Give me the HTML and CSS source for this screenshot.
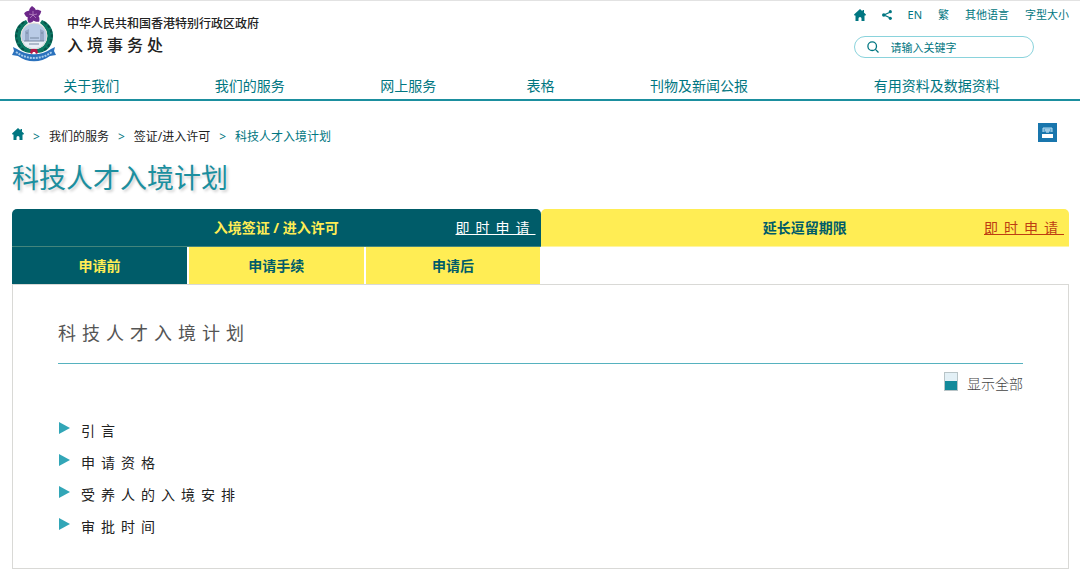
FILE: index.html
```html
<!DOCTYPE html>
<html lang="zh-CN">
<head>
    <meta charset="UTF-8">
    <meta name="viewport" content="width=device-width, initial-scale=1.0">
    <title>科技人才入境计划</title>
    <link rel="stylesheet" href="styles.css">
</head>
<body>
    <header class="site-header">
        <div class="header-top">
            <a class="brand" href="#">
                <svg class="brand-logo" viewBox="0 0 44 56" aria-hidden="true">
                    <path d="M14 13C4 17 1 27 4 35c2 7 8 11 15 11l1-4c-7-1-10-5-11-11-1-7 2-11 7-15z" fill="#0b7763"/>
                    <path d="M30 13c10 4 13 14 10 22-2 7-8 11-15 11l-1-4c7-1 10-5 11-11 1-7-2-11-7-15z" fill="#0b7763"/>
                    <path d="M12 15C5 20 3 27 5 34c2 5 5 8 9 10M32 15c7 5 9 12 7 19-2 5-5 8-9 10" fill="none" stroke="#075148" stroke-width="2" stroke-dasharray="3 2"/>
                    <circle cx="22" cy="29" r="13" fill="#b9cbe6" stroke="#e3ded6" stroke-width="1"/>
                    <path d="M13 24l4-2v13h-4zM28 22l4 2v11h-4z" fill="#97a9c8"/>
                    <path d="M11 34h22c-2 5-5 7-11 7s-9-2-11-7z" fill="#e8eff6"/>
                    <path d="M12 34h20M18 31h9M17 37h10M14 26h2M29 26h2" stroke="#74869f" stroke-width="1"/>
                    <path d="M1 40l4 2c10 7 24 7 34 0l4-2-1 4 2 4-6 1c-9 7-23 7-32 0l-6-1 2-4z" fill="#2b72bd"/>
                    <path d="M4 45c11 8 25 8 36 0" fill="none" stroke="#a9cdec" stroke-width="2" stroke-dasharray="2 1"/>
                    <path d="M18 46l1-4h6l1 4-2 1-1-2h-2l-1 2z" fill="#b41848"/>
                    <g fill="#6c2789">
                        <path id="petal" d="M21 8c-5-2-5-6-1-9 5 3 5 6 1 9z"/>
                        <use href="#petal" transform="rotate(72 21 8)"/>
                        <use href="#petal" transform="rotate(144 21 8)"/>
                        <use href="#petal" transform="rotate(216 21 8)"/>
                        <use href="#petal" transform="rotate(288 21 8)"/>
                    </g>
                    <path d="M21 8V4M21 8l4-1M21 8l3 3M21 8l-3 3M21 8l-4-1" stroke="#c193cb" stroke-width=".7"/>
                </svg>
                <span class="brand-text">
                    <span class="brand-gov">中华人民共和国香港特别行政区政府</span>
                    <span class="brand-dept">入境事务处</span>
                </span>
            </a>
            <div class="header-tools">
                <nav class="tool-links" aria-label="工具">
                    <a href="#" aria-label="主页">
                        <svg class="icon-home" viewBox="0 0 12 12" aria-hidden="true"><path d="M6 0l6 5.500-.8 1.200-.7-.2V12H7.500V9.500a1.500 1.500 0 0 0-3 0V12h-3V6.500l-.7.2L0 5.500zM8.500 1H10v2.500l-1.500-1z"/></svg>
                    </a>
                    <a href="#" aria-label="分享">
                        <svg class="icon-share" viewBox="0 0 10 10" aria-hidden="true"><path d="M8.500 2L2 5l6.500 3" fill="none" stroke="#007681" stroke-width="1.300"/><circle cx="8.300" cy="1.700" r="1.600"/><circle cx="1.800" cy="5" r="1.800"/><circle cx="8.300" cy="8.300" r="1.600"/></svg>
                    </a>
                    <a href="#">EN</a>
                    <a href="#">繁</a>
                    <a href="#">其他语言</a>
                    <a href="#">字型大小</a>
                </nav>
                <form class="search">
                    <button class="search-button" type="submit" aria-label="搜寻">
                        <svg viewBox="0 0 12 12" aria-hidden="true"><circle cx="5.200" cy="5.200" r="4.300"/><path d="M8.400 8.400L11.500 11.500"/></svg>
                    </button>
                    <input class="search-input" type="text" placeholder="请输入关键字" aria-label="请输入关键字">
                </form>
            </div>
        </div>
        <nav class="main-nav" aria-label="主目录">
            <a href="#">关于我们</a>
            <a href="#">我们的服务</a>
            <a href="#">网上服务</a>
            <a href="#">表格</a>
            <a href="#">刊物及新闻公报</a>
            <a href="#">有用资料及数据资料</a>
        </nav>
    </header>

    <main class="page">
        <div class="page-bar">
            <nav class="breadcrumb" aria-label="路径">
                <a class="breadcrumb-home" href="#" aria-label="主页">
                    <svg class="icon-home" viewBox="0 0 12 12" aria-hidden="true"><path d="M6 0l6 5.500-.8 1.200-.7-.2V12H7.500V9.500a1.500 1.500 0 0 0-3 0V12h-3V6.500l-.7.2L0 5.500zM8.500 1H10v2.500l-1.500-1z"/></svg>
                </a>
                <span class="separator">&gt;</span>
                <a href="#">我们的服务</a>
                <span class="separator">&gt;</span>
                <a href="#">签证/进入许可</a>
                <span class="separator">&gt;</span>
                <span class="current">科技人才入境计划</span>
            </nav>
            <button class="print-button" type="button" aria-label="列印">
                <svg viewBox="0 0 19 19" aria-hidden="true">
                    <path d="M5 9V5h9v4" fill="#5ca5d1" stroke="#b5dcf0"/>
                    <path d="M7 7h5M8 9h3" stroke="#d8edf8"/>
                    <path d="M4 11h11v4H4z" fill="#fff"/>
                </svg>
            </button>
        </div>

        <h1 class="page-title">科技人才入境计划</h1>

        <div class="tabs">
            <div class="tab tab-active">
                <a class="tab-name" href="#">入境签证 / 进入许可</a>
                <a class="apply-link" href="#">即时申请</a>
            </div>
            <div class="tab">
                <a class="tab-name" href="#">延长逗留期限</a>
                <a class="apply-link" href="#">即时申请</a>
            </div>
        </div>
        <div class="subtabs">
            <button class="subtab subtab-active" type="button">申请前</button>
            <button class="subtab" type="button">申请手续</button>
            <button class="subtab" type="button">申请后</button>
        </div>

        <section class="panel">
            <h2 class="panel-title">科技人才入境计划</h2>
            <div class="panel-actions">
                <button class="show-all" type="button"><span class="show-all-icon"></span>显示全部</button>
            </div>
            <ul class="topics">
                <li><button class="topic" type="button">引言</button></li>
                <li><button class="topic" type="button">申请资格</button></li>
                <li><button class="topic" type="button">受养人的入境安排</button></li>
                <li><button class="topic" type="button">审批时间</button></li>
            </ul>
        </section>
    </main>
</body>
</html>
```
FILE: styles.css
```css
:root {
    --teal: #007681;
    --teal-dark: #005c69;
    --teal-light: #1b8f9f;
    --yellow: #ffed54;
    --border: #d9d9d6;
}

* {
    box-sizing: border-box;
}

body {
    margin: 0;
    font-family: "Noto Sans", "Noto Sans CJK SC", sans-serif;
    font-size: 14px;
    line-height: 20px;
    color: #222222;
    background-color: #ffffff;
}

a {
    color: inherit;
    text-decoration: none;
}

button {
    padding: 0;
    border: none;
    background: none;
    color: inherit;
    font: inherit;
    cursor: pointer;
}

svg {
    display: block;
}

/* Header */
.site-header {
    border-top: 1px solid #e2e2e2;
    border-bottom: 2px solid var(--teal-light);
    color: var(--teal);
}

.header-top {
    display: flex;
    justify-content: space-between;
    padding: 6px 11px 0 12px;
}

.brand {
    display: flex;
    gap: 11px;
    color: #222222;
}

.brand-logo {
    width: 44px;
    height: 56px;
    overflow: visible;
}

.brand-text {
    display: flex;
    flex-direction: column;
    padding-top: 7px;
    font-weight: 500;
}

.brand-gov {
    font-size: 12px;
}

.brand-dept {
    font-size: 16px;
    line-height: 22px;
    letter-spacing: 4px;
}

.header-tools {
    display: flex;
    flex-direction: column;
    gap: 13px;
}

.tool-links {
    display: flex;
    align-items: center;
    gap: 16px;
    height: 16px;
    font-size: 11px;
}

.icon-home {
    width: 12px;
    height: 12px;
    fill: var(--teal);
}

.icon-share {
    width: 10px;
    height: 10px;
    fill: var(--teal);
}

.search {
    display: flex;
    align-items: center;
    gap: 12px;
    width: 180px;
    height: 22px;
    padding: 0 12px;
    border: 1px solid #8ad3dc;
    border-radius: 11px;
}

.search-button svg {
    width: 12px;
    height: 12px;
    fill: none;
    stroke: var(--teal);
    stroke-width: 1.3;
}

.search-input {
    flex: 1;
    min-width: 0;
    padding: 0;
    border: none;
    outline: none;
    background: none;
    color: var(--teal);
    font-family: inherit;
    font-size: 11px;
}

.search-input::placeholder {
    color: var(--teal);
    opacity: 1;
}

.main-nav {
    display: grid;
    grid-template-columns: 3fr 3fr 3fr 2fr 4fr 5fr;
    padding: 13px 11px 3px 12px;
    text-align: center;
}

/* Page */
.page {
    padding: 22px 11px 8px 12px;
}

.page-bar {
    display: flex;
    justify-content: space-between;
    padding-right: 12px;
}

.breadcrumb {
    display: flex;
    align-items: center;
    gap: 9px;
    padding-top: 4px;
    font-size: 12px;
}

.breadcrumb-home {
    padding-bottom: 6px;
}

.separator,
.current {
    color: var(--teal);
}

.print-button {
    width: 19px;
    height: 19px;
    background-color: #1976ad;
}

.page-title {
    margin: 12px 0;
    font-size: 27px;
    font-weight: 400;
    line-height: 38px;
    color: var(--teal-light);
    text-shadow: 2px 2px 3px rgba(0, 0, 0, 0.2);
}

/* Tabs */
.tabs {
    display: grid;
    grid-template-columns: 1fr 1fr;
}

.tab {
    display: grid;
    grid-template-columns: 1fr auto 1fr;
    align-items: center;
    height: 38px;
    padding: 0 5px;
    border-bottom: 1px solid #fff5a0;
    border-radius: 5px 5px 0 0;
    background-color: var(--yellow);
    color: var(--teal-dark);
}

.tab-active {
    border-bottom-color: #44857c;
    background-color: var(--teal-dark);
    color: var(--yellow);
}

.tab-name {
    grid-column: 2;
    font-weight: 700;
}

.apply-link {
    justify-self: end;
    color: #bd3d12;
    letter-spacing: 6px;
    text-decoration: underline;
}

.tab-active .apply-link {
    color: #ffffff;
}

.subtabs {
    display: grid;
    grid-template-columns: repeat(3, 1fr);
    gap: 2px;
    width: 50%;
}

.subtab {
    height: 37px;
    background-color: var(--yellow);
    color: var(--teal-dark);
    font-weight: 700;
}

.subtab-active {
    background-color: var(--teal-dark);
    color: var(--yellow);
}

/* Content panel */
.panel {
    padding: 33px 45px 25px;
    border: 1px solid var(--border);
}

.panel-title {
    margin: 0;
    padding-bottom: 15px;
    border-bottom: 1px solid #56b2bf;
    font-size: 18px;
    font-weight: 400;
    line-height: 30px;
    letter-spacing: 6px;
    color: #555555;
}

.panel-actions {
    display: flex;
    justify-content: flex-end;
    padding: 8px 0 19px;
}

.show-all {
    display: flex;
    gap: 9px;
    line-height: 24px;
    font-weight: 300;
    color: #444444;
}

.show-all-icon {
    width: 14px;
    height: 19px;
    border: 1px solid #b8c4c7;
    background: linear-gradient(#e3f0f6 50%, #12899a 50%);
}

.topics {
    margin: 0;
    padding: 0;
    list-style: none;
}

.topic {
    display: flex;
    gap: 11px;
    line-height: 32px;
    letter-spacing: 6px;
}

.topic::before {
    content: "";
    margin: 7px 0 0 1px;
    border: 6px solid transparent;
    border-right: none;
    border-left: 11px solid #32a6b7;
    height: 0;
}
```
